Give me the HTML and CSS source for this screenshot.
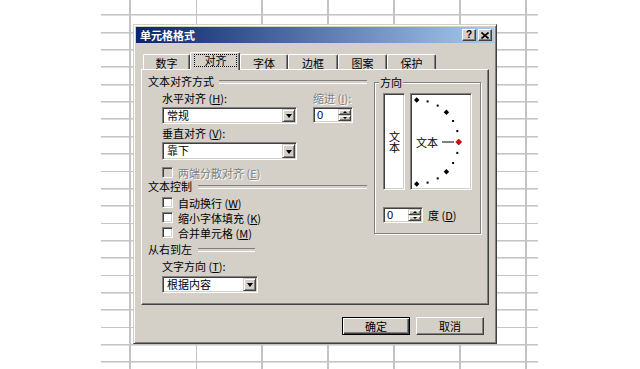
FILE: index.html
```html
<!DOCTYPE html>
<html lang="zh-CN">
<head>
<meta charset="utf-8">
<title>单元格格式</title>
<link rel="stylesheet" href="styles.css">
</head>
<body>
<div class="sheet"></div>
<div class="dialog">
  <div class="titlebar">
    <span class="title">单元格格式</span>
    <span class="tbtn help">?</span>
    <span class="tbtn close"><svg width="8" height="7" viewBox="0 0 8 7"><path d="M0.5 0.5 L7.5 6.5 M7.5 0.5 L0.5 6.5" stroke="#000" stroke-width="1.6" fill="none"/></svg></span>
  </div>
  <div class="tabs">
    <div class="tab t1">数字</div>
    <div class="tab active t2"><span class="focus">对齐</span></div>
    <div class="tab t3">字体</div>
    <div class="tab t4">边框</div>
    <div class="tab t5">图案</div>
    <div class="tab t6">保护</div>
  </div>
  <div class="panel">
    <div class="leftcol">
      <div class="heading h1">文本对齐方式</div>
      <div class="indent">
        <div class="hrow">
          <div class="hcol">
            <div class="label la">水平对齐 (<u>H</u>):</div>
            <div class="combo c1"><span class="val">常规</span><span class="drop"><span class="arrow"></span></span></div>
          </div>
          <div class="icol">
            <div class="label la disabled">缩进 (<u>I</u>):</div>
            <div class="spin s1"><span class="val">0</span><span class="spinbtns"><span class="sb"><span class="tri up"></span></span><span class="sb"><span class="tri down"></span></span></span></div>
          </div>
        </div>
        <div class="label lb">垂直对齐 (<u>V</u>):</div>
        <div class="combo c2"><span class="val">靠下</span><span class="drop"><span class="arrow"></span></span></div>
        <div class="check cd disabled"><span class="box"></span><span>两端分散对齐 (<u>E</u>)</span></div>
      </div>
      <div class="heading h2">文本控制</div>
      <div class="indent checks">
        <div class="check"><span class="box"></span><span>自动换行 (<u>W</u>)</span></div>
        <div class="check"><span class="box"></span><span>缩小字体填充 (<u>K</u>)</span></div>
        <div class="check"><span class="box"></span><span>合并单元格 (<u>M</u>)</span></div>
      </div>
      <div class="heading h3">从右到左</div>
      <div class="indent">
        <div class="label lc">文字方向 (<u>T</u>):</div>
        <div class="combo c3"><span class="val">根据内容</span><span class="drop"><span class="arrow"></span></span></div>
      </div>
    </div>
    <div class="group">
      <div class="gtitle">方向</div>
      <div class="orient">
        <div class="vbox"><span class="vtext">文本</span></div>
        <div class="dial">
          <svg width="58" height="93" viewBox="0 0 58 93">
            <g fill="#000">
              <polygon points="4.7,2.3 7.4,5 4.7,7.7 2,5"/>
              <polygon points="34.4,14.6 37.1,17.3 34.4,20 31.7,17.3"/>
              <polygon points="34.4,74 37.1,76.7 34.4,79.4 31.7,76.7"/>
              <polygon points="4.7,86.3 7.4,89 4.7,91.7 2,89"/>
              <rect x="14.6" y="5.4" width="2" height="2"/>
              <rect x="24.7" y="9.6" width="2" height="2"/>
              <rect x="40.1" y="25" width="2" height="2"/>
              <rect x="44.3" y="35.1" width="2" height="2"/>
              <rect x="44.3" y="56.9" width="2" height="2"/>
              <rect x="40.1" y="67" width="2" height="2"/>
              <rect x="24.7" y="82.4" width="2" height="2"/>
              <rect x="14.6" y="86.6" width="2" height="2"/>
              <rect x="30" y="46.5" width="12" height="1"/>
            </g>
            <polygon points="46.7,44 49.7,47 46.7,50 43.7,47" fill="#e00000" stroke="#800000" stroke-width="0.6"/>
            <text x="4" y="47" class="dialtext">文本</text>
          </svg>
        </div>
      </div>
      <div class="degrow">
        <div class="spin s2"><span class="val">0</span><span class="spinbtns"><span class="sb"><span class="tri up"></span></span><span class="sb"><span class="tri down"></span></span></span></div>
        <span class="label deg">度 (<u>D</u>)</span>
      </div>
    </div>
  </div>
  <div class="buttons">
    <div class="btn default">确定</div>
    <div class="btn">取消</div>
  </div>
</div>
</body>
</html>
```

FILE: styles.css
```css
* { box-sizing: border-box; }
html, body { margin: 0; padding: 0; }
body {
  width: 640px;
  height: 369px;
  overflow: hidden;
  background: #fff;
  position: relative;
  font-family: "Noto Sans CJK SC", "Noto Sans", sans-serif;
  font-size: 11px;
  color: #000;
}
u { text-decoration: underline; text-underline-offset: 1px; }

.sheet {
  margin-left: 101px;
  width: 437px;
  height: 369px;
  background-image:
    repeating-linear-gradient(to right, transparent 0, transparent 28.5px, #c4c4c4 28.5px, #c4c4c4 30px, transparent 30px, transparent 66px),
    repeating-linear-gradient(to bottom, transparent 0, transparent 14.4px, #c4c4c4 14.4px, #c4c4c4 15.4px, #dedede 15.4px, #dedede 16.2px, transparent 16.2px, transparent 17.35px);
}

.dialog {
  position: absolute;
  left: 133px;
  top: 24px;
  width: 364px;
  height: 320px;
  background: #d4d0c8;
  border: 1px solid;
  border-color: #d4d0c8 #404040 #404040 #d4d0c8;
  box-shadow: inset 1px 1px #fff, inset -1px -1px #808080;
  padding: 2px;
  display: flex;
  flex-direction: column;
}

.titlebar {
  height: 16px;
  background: linear-gradient(to right, #0a246a, #a6caf0);
  display: flex;
  align-items: center;
  padding: 0 2px 0 2px;
}
.title {
  flex: 1;
  color: #fff;
  font-weight: bold;
  line-height: 16px;
  padding-left: 2px;
}
.tbtn {
  width: 14px;
  height: 12px;
  background: #d4d0c8;
  border: 1px solid;
  border-color: #fff #404040 #404040 #fff;
  box-shadow: inset -1px -1px #808080;
  display: flex;
  align-items: center;
  justify-content: center;
  color: #000;
}
.tbtn + .tbtn { margin-left: 2px; }
.help {
  font-family: "Liberation Sans", sans-serif;
  font-weight: bold;
  font-size: 10px;
  line-height: 10px;
}

.tabs {
  margin-top: 9px;
  height: 17px;
  padding-left: 7px;
  display: flex;
  align-items: flex-end;
}
.tab {
  height: 15px;
  background: #d4d0c8;
  border-top: 1px solid #fff;
  border-left: 1px solid #fff;
  border-right: 1px solid #404040;
  box-shadow: inset -1px 0 #808080;
  border-radius: 2px 2px 0 0;
  display: flex;
  align-items: center;
  justify-content: center;
  line-height: 12px;
  padding-top: 1px;
}
.t1 { width: 47px; }
.t2 { width: 50px; }
.t3 { width: 48px; }
.t4 { width: 50px; }
.t5 { width: 49px; }
.t6 { width: 49px; }
.tab.active {
  height: 18px;
  margin-bottom: -1px;
  position: relative;
  z-index: 2;
  padding-top: 0;
  padding-bottom: 2px;
}
.focus {
  display: inline-block;
  border: 1px dotted #000;
  line-height: 11px;
  padding: 0 9px 0 10px;
}

.panel {
  margin-left: 5px;
  width: 348px;
  height: 236px;
  border: 1px solid;
  border-color: #fff #404040 #404040 #fff;
  box-shadow: inset -1px -1px #808080;
  padding: 5px 0 0 6px;
  display: flex;
  gap: 7px;
}

.leftcol {
  width: 219px;
  display: flex;
  flex-direction: column;
}
.heading {
  display: flex;
  align-items: center;
  line-height: 12px;
  height: 12px;
  white-space: nowrap;
}
.heading::after {
  content: "";
  flex: 1;
  height: 2px;
  margin-top: 2px;
  border-top: 1px solid #808080;
  border-bottom: 1px solid #fff;
}
.h1::after { margin-left: 5px; }
.h2 { margin-top: 1.5px; }
.h2::after { margin-left: 6px; }
.h3 { width: 107px; margin-top: 3px; }
.h3::after { margin-left: 6px; }

.indent { padding-left: 14px; display: flex; flex-direction: column; }
.hrow { display: flex; }
.hcol { width: 135px; }
.icol { width: 40px; margin-left: 16px; }

.label {
  line-height: 12px;
  height: 12px;
  white-space: nowrap;
}
.la { margin-top: 5px; }
.lb { margin-top: 3px; }
.lc { margin-top: 4.5px; }
.disabled { color: #808080; text-shadow: 1px 1px 0 #fff; }

.combo {
  display: flex;
  height: 17px;
  background: #fff;
  border: 1px solid;
  border-color: #808080 #fff #fff #808080;
  box-shadow: inset 1px 1px #404040, inset -1px -1px #d4d0c8;
  padding: 1px;
}
.c1 { margin-top: 3px; width: 135px; }
.c2 { margin-top: 3px; width: 135px; height: 18px; }
.c3 { margin-top: 4px; width: 96px; }
.combo .val {
  flex: 1;
  line-height: 13px;
  padding-left: 3px;
  white-space: nowrap;
}
.drop {
  width: 13px;
  background: #d4d0c8;
  border: 1px solid;
  border-color: #d4d0c8 #404040 #404040 #d4d0c8;
  box-shadow: inset 1px 1px #fff, inset -1px -1px #808080;
  display: flex;
  align-items: center;
  justify-content: center;
}
.arrow {
  width: 0;
  height: 0;
  border-left: 3.5px solid transparent;
  border-right: 3.5px solid transparent;
  border-top: 4px solid #000;
  margin-top: 1px;
}

.spin {
  display: flex;
  width: 40px;
  height: 16px;
  background: #fff;
  border: 1px solid;
  border-color: #808080 #fff #fff #808080;
  box-shadow: inset 1px 1px #404040, inset -1px -1px #d4d0c8;
  padding: 1px;
}
.s1 { margin-top: 3px; }
.spin .val {
  flex: 1;
  line-height: 12px;
  padding-left: 2px;
  font-family: "Liberation Sans", sans-serif;
}
.spinbtns {
  width: 13px;
  display: flex;
  flex-direction: column;
}
.sb {
  flex: 1;
  background: #d4d0c8;
  border: 1px solid;
  border-color: #d4d0c8 #404040 #404040 #d4d0c8;
  box-shadow: inset 1px 1px #fff, inset -1px -1px #808080;
  display: flex;
  align-items: center;
  justify-content: center;
}
.tri {
  width: 0;
  height: 0;
  border-left: 2.5px solid transparent;
  border-right: 2.5px solid transparent;
}
.tri.up { border-bottom: 2.5px solid #000; }
.tri.down { border-top: 2.5px solid #000; }

.check {
  display: flex;
  align-items: center;
  height: 15px;
  white-space: nowrap;
}
.check.cd { height: 12px; margin-top: 6.5px; }
.checks { margin-top: 3px; }
.box {
  width: 11px;
  height: 11px;
  margin-right: 5px;
  background: #fff;
  border: 1px solid;
  border-color: #808080 #fff #fff #808080;
  box-shadow: inset 1px 1px #404040, inset -1px -1px #d4d0c8;
  flex: none;
}
.check.disabled .box { background: #d4d0c8; }

.group {
  width: 107px;
  height: 152px;
  margin-top: 7px;
  border: 1px solid #808080;
  box-shadow: inset 1px 1px #fff, 1px 1px #fff;
  padding-left: 8px;
  display: flex;
  flex-direction: column;
}
.gtitle {
  align-self: flex-start;
  margin-top: -7px;
  margin-left: -4px;
  padding: 0 1px;
  background: #d4d0c8;
  line-height: 12px;
  height: 12px;
}
.orient {
  margin-top: 5px;
  display: flex;
  gap: 5px;
}
.vbox, .dial {
  height: 97px;
  background: #fff;
  border: 1px solid;
  border-color: #808080 #fff #fff #808080;
  box-shadow: inset 1px 1px #404040, inset -1px -1px #d4d0c8;
  padding: 1px;
}
.vbox {
  width: 22px;
  display: flex;
  align-items: center;
  justify-content: center;
}
.vtext {
  writing-mode: vertical-rl;
  line-height: 11px;
  margin-top: 1px;
}
.dial { width: 62px; }
.dial svg { display: block; }
.dialtext {
  font-family: "Noto Sans CJK SC", sans-serif;
  font-size: 11px;
  dominant-baseline: central;
}
.degrow {
  margin-top: 16.5px;
  display: flex;
  align-items: center;
}
.deg { margin-left: 5px; }

.buttons {
  margin-top: 12px;
  padding-right: 10px;
  display: flex;
  justify-content: flex-end;
  gap: 6px;
}
.btn {
  width: 68px;
  height: 18px;
  line-height: 16px;
  text-align: center;
  background: #d4d0c8;
  border: 1px solid;
  border-color: #fff #404040 #404040 #fff;
  box-shadow: inset -1px -1px #808080;
}
.btn.default {
  border: 1px solid #000;
  box-shadow: inset 1px 1px #fff, inset -1px -1px #404040, inset -2px -2px #808080;
}
```
